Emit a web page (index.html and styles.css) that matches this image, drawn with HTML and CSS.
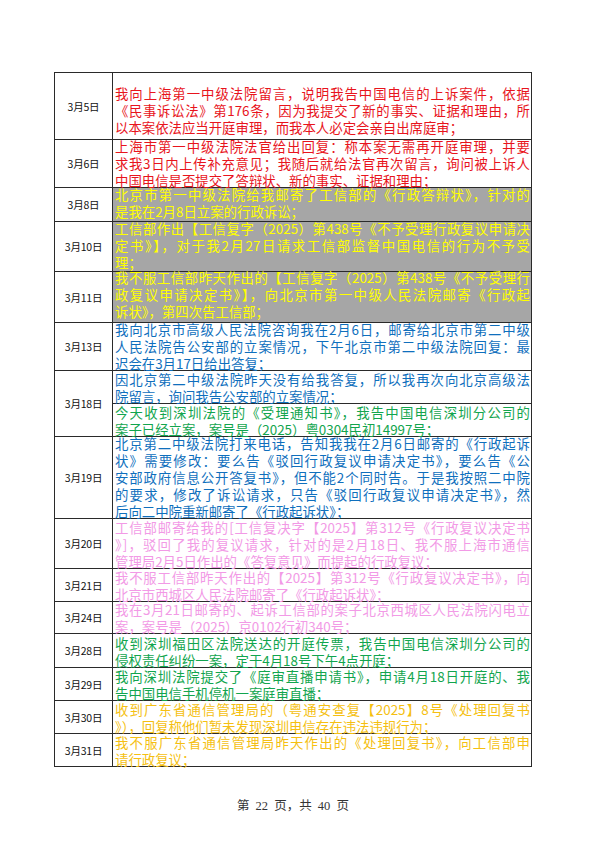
FILE: index.html
```html
<!DOCTYPE html>
<html lang="zh-CN">
<head>
<meta charset="utf-8">
<title>第 22 页</title>
<link rel="stylesheet" href="styles.css">
</head>
<body>
<div class="page">
  <div class="sheet">
    <div class="date r1">3月5日</div>
    <div class="txt red r1 up5"><span class="ln">我向上海第一中级法院留言，说明我告中国电信的上诉案件，依据</span><span class="ln">《民事诉讼法》第176条，因为我提交了新的事实、证据和理由，所</span><span class="ln last">以本案依法应当开庭审理，而我本人必定会亲自出席庭审；</span></div>

    <div class="date r2">3月6日</div>
    <div class="txt red r2"><span class="ln">上海市第一中级法院法官给出回复：称本案无需再开庭审理，并要</span><span class="ln">求我3日内上传补充意见；我随后就给法官再次留言，询问被上诉人</span><span class="ln last">中国电信是否提交了答辩状、新的事实、证据和理由；</span></div>

    <div class="date r3">3月8日</div>
    <div class="txt yel r3 up3"><span class="ln">北京市第一中级法院给我邮寄了工信部的《行政答辩状》，针对的</span><span class="ln last">是我在2月8日立案的行政诉讼；</span></div>

    <div class="date r4">3月10日</div>
    <div class="txt yel r4 up1"><span class="ln">工信部作出【工信复字（2025）第438号《不予受理行政复议申请决</span><span class="ln">定书》】，对于我2月27日请求工信部监督中国电信的行为不予受</span><span class="ln last">理；</span></div>

    <div class="date r5">3月11日</div>
    <div class="txt yel r5 up4"><span class="ln">我不服工信部昨天作出的【工信复字（2025）第438号《不予受理行</span><span class="ln">政复议申请决定书》】，向北京市第一中级人民法院邮寄《行政起</span><span class="ln last">诉状》，第四次告工信部；</span></div>

    <div class="date r6">3月13日</div>
    <div class="txt blue r6"><span class="ln">我向北京市高级人民法院咨询我在2月6日，邮寄给北京市第二中级</span><span class="ln">人民法院告公安部的立案情况，下午北京市第二中级法院回复：最</span><span class="ln last">迟会在3月17日给出答复；</span></div>

    <div class="date span2">3月18日</div>
    <div class="txt blue r7"><span class="ln">因北京第二中级法院昨天没有给我答复，所以我再次向北京高级法</span><span class="ln last">院留言，询问我告公安部的立案情况；</span></div>
    <div class="txt green r8"><span class="ln">今天收到深圳法院的《受理通知书》，我告中国电信深圳分公司的</span><span class="ln last">案子已经立案，案号是（2025）粤0304民初14997号；</span></div>

    <div class="date r9">3月19日</div>
    <div class="txt blue r9"><span class="ln">北京第二中级法院打来电话，告知我我在2月6日邮寄的《行政起诉</span><span class="ln">状》需要修改：要么告《驳回行政复议申请决定书》，要么告《公</span><span class="ln">安部政府信息公开答复书》，但不能2个同时告。于是我按照二中院</span><span class="ln">的要求，修改了诉讼请求，只告《驳回行政复议申请决定书》，然</span><span class="ln last">后向二中院重新邮寄了《行政起诉状》；</span></div>

    <div class="date r10">3月20日</div>
    <div class="txt pink r10"><span class="ln">工信部邮寄给我的[工信复决字【2025】第312号《行政复议决定书</span><span class="ln">》]，驳回了我的复议请求，针对的是2月18日、我不服上海市通信</span><span class="ln last">管理局2月5日作出的《答复意见》而提起的行政复议；</span></div>

    <div class="date r11">3月21日</div>
    <div class="txt pink r11"><span class="ln">我不服工信部昨天作出的【2025】第312号《行政复议决定书》，向</span><span class="ln last">北京市西城区人民法院邮寄了《行政起诉状》；</span></div>

    <div class="date r12">3月24日</div>
    <div class="txt pink r12"><span class="ln">我在3月21日邮寄的、起诉工信部的案子北京西城区人民法院闪电立</span><span class="ln last">案，案号是（2025）京0102行初340号；</span></div>

    <div class="date r13">3月28日</div>
    <div class="txt green r13"><span class="ln">收到深圳福田区法院送达的开庭传票，我告中国电信深圳分公司的</span><span class="ln last">侵权责任纠纷一案，定于4月18号下午4点开庭；</span></div>

    <div class="date r14">3月29日</div>
    <div class="txt green r14"><span class="ln">我向深圳法院提交了《庭审直播申请书》，申请4月18日开庭的、我</span><span class="ln last">告中国电信手机停机一案庭审直播；</span></div>

    <div class="date r15">3月30日</div>
    <div class="txt gold r15"><span class="ln">收到广东省通信管理局的（粤通安查复【2025】8号《处理回复书</span><span class="ln last">》），回复称他们暂未发现深圳电信存在违法违规行为；</span></div>

    <div class="date r16">3月31日</div>
    <div class="txt gold r16"><span class="ln">我不服广东省通信管理局昨天作出的《处理回复书》，向工信部申</span><span class="ln last">请行政复议；</span></div>
  </div>
  <div class="footer">第 22 页，共 40 页</div>
</div>
</body>
</html>
```

FILE: styles.css
```css
html, body {
  margin: 0;
  padding: 0;
  background: #ffffff;
}

.page {
  padding: 72px 0 0 54px;
  width: 545px;
}

.sheet {
  display: grid;
  grid-template-columns: 57px 418px;
  grid-template-rows: 66px 47px 33px 49px 50px 47px 32px 32px 81px 49px 32px 31px 33px 32px 32px 32px;
  gap: 1px;
  width: 478px;
  box-sizing: border-box;
  border: 1px solid #2a2a2a;
  background: #2a2a2a;
  font-family: "Noto Sans CJK SC", "Noto Sans", sans-serif;
}

.date {
  grid-column: 1;
  background: #ffffff;
  display: flex;
  align-items: center;
  justify-content: center;
  font-size: 10.5px;
  color: #111111;
  letter-spacing: -0.2px;
}

.txt {
  grid-column: 2;
  background: #ffffff;
  display: flex;
  flex-direction: column;
  justify-content: flex-end;
  padding: 0 1px 0 2px;
  font-size: 13.4px;
  line-height: 17px;
  min-height: 0;
  min-width: 0;
  overflow: visible;
}

.ln {
  display: block;
  white-space: nowrap;
  text-align: justify;
  text-align-last: justify;
  text-justify: inter-character;
  margin-bottom: 0;
}

.ln.last {
  text-align: left;
  text-align-last: left;
  margin-bottom: -2px;
}

.up1 .ln.last { margin-bottom: 0; }
.up3 .ln.last { margin-bottom: 1px; }
.up4 .ln.last { margin-bottom: 2px; }
.up5 .ln.last { margin-bottom: 3px; }

.r1 { grid-row: 1; }
.r2 { grid-row: 2; }
.r3 { grid-row: 3; }
.r4 { grid-row: 4; }
.r5 { grid-row: 5; }
.r6 { grid-row: 6; }
.r7 { grid-row: 7; }
.r8 { grid-row: 8; }
.r9 { grid-row: 9; }
.r10 { grid-row: 10; }
.r11 { grid-row: 11; }
.r12 { grid-row: 12; }
.r13 { grid-row: 13; }
.r14 { grid-row: 14; }
.r15 { grid-row: 15; }
.r16 { grid-row: 16; }
.span2 { grid-row: 7 / span 2; }

.red { color: #e8141c; }
.yel { color: #ffff00; background: #a6a6a6; }
.blue { color: #0f6fbd; }
.green { color: #12a54e; }
.pink { color: #f29ae6; }
.gold { color: #f5bf12; }

.footer {
  width: 478px;
  margin-top: 28px;
  text-align: center;
  font-family: "Liberation Serif", "Noto Sans CJK SC", serif;
  font-size: 12.5px;
  color: #333333;
  word-spacing: 3px;
}
```
